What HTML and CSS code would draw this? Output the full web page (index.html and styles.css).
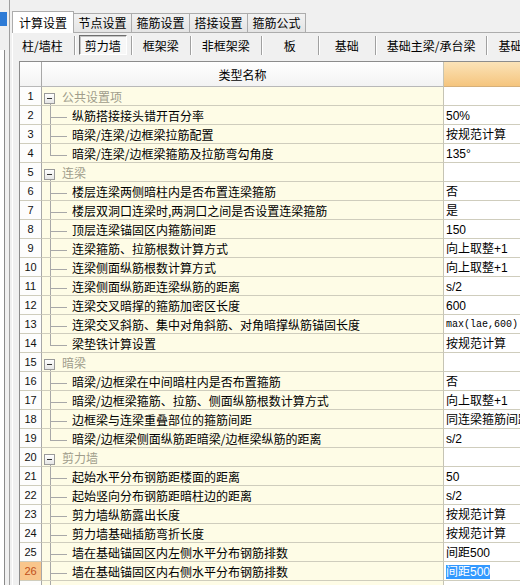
FILE: index.html
```html
<!DOCTYPE html>
<html lang="zh-CN">
<head>
<meta charset="utf-8">
<title>计算设置</title>
<link rel="stylesheet" href="styles.css">
</head>
<body>
<div class="app">
  <aside class="side">
    <div class="side-sel"></div>
    <div class="side-list"></div>
  </aside>
  <main class="main">
    <div class="tabs">
      <div class="tab active">计算设置</div>
      <div class="tab">节点设置</div>
      <div class="tab">箍筋设置</div>
      <div class="tab">搭接设置</div>
      <div class="tab">箍筋公式</div>
    </div>
    <div class="page">
      <div class="subtabs">
        <div class="sub">柱/墙柱</div>
        <div class="sub pressed"><span class="btn">剪力墙</span></div>
        <div class="sub">框架梁</div>
        <div class="sub">非框架梁</div>
        <div class="sub">板</div>
        <div class="sub">基础</div>
        <div class="sub">基础主梁/承台梁</div>
        <div class="sub">基础次梁</div>
      </div>
      <div class="grid">
        <div class="row head"><div class="num"></div><div class="name">类型名称</div><div class="val"></div></div>

        <div class="row group"><div class="num">1</div><div class="name"><span class="box"></span>公共设置项</div><div class="val"></div></div>
        <div class="row child"><div class="num">2</div><div class="name">纵筋搭接接头错开百分率</div><div class="val">50%</div></div>
        <div class="row child"><div class="num">3</div><div class="name">暗梁/连梁/边框梁拉筋配置</div><div class="val">按规范计算</div></div>
        <div class="row child last"><div class="num">4</div><div class="name">暗梁/连梁/边框梁箍筋及拉筋弯勾角度</div><div class="val">135°</div></div>

        <div class="row group"><div class="num">5</div><div class="name"><span class="box"></span>连梁</div><div class="val"></div></div>
        <div class="row child"><div class="num">6</div><div class="name">楼层连梁两侧暗柱内是否布置连梁箍筋</div><div class="val">否</div></div>
        <div class="row child"><div class="num">7</div><div class="name">楼层双洞口连梁时,两洞口之间是否设置连梁箍筋</div><div class="val">是</div></div>
        <div class="row child"><div class="num">8</div><div class="name">顶层连梁锚固区内箍筋间距</div><div class="val">150</div></div>
        <div class="row child"><div class="num">9</div><div class="name">连梁箍筋、拉筋根数计算方式</div><div class="val">向上取整+1</div></div>
        <div class="row child"><div class="num">10</div><div class="name">连梁侧面纵筋根数计算方式</div><div class="val">向上取整+1</div></div>
        <div class="row child"><div class="num">11</div><div class="name">连梁侧面纵筋距连梁纵筋的距离</div><div class="val">s/2</div></div>
        <div class="row child"><div class="num">12</div><div class="name">连梁交叉暗撑的箍筋加密区长度</div><div class="val">600</div></div>
        <div class="row child"><div class="num">13</div><div class="name">连梁交叉斜筋、集中对角斜筋、对角暗撑纵筋锚固长度</div><div class="val mono">max(lae,600)</div></div>
        <div class="row child last"><div class="num">14</div><div class="name">梁垫铁计算设置</div><div class="val">按规范计算</div></div>

        <div class="row group"><div class="num">15</div><div class="name"><span class="box"></span>暗梁</div><div class="val"></div></div>
        <div class="row child"><div class="num">16</div><div class="name">暗梁/边框梁在中间暗柱内是否布置箍筋</div><div class="val">否</div></div>
        <div class="row child"><div class="num">17</div><div class="name">暗梁/边框梁箍筋、拉筋、侧面纵筋根数计算方式</div><div class="val">向上取整+1</div></div>
        <div class="row child"><div class="num">18</div><div class="name">边框梁与连梁重叠部位的箍筋间距</div><div class="val">同连梁箍筋间距</div></div>
        <div class="row child last"><div class="num">19</div><div class="name">暗梁/边框梁侧面纵筋距暗梁/边框梁纵筋的距离</div><div class="val">s/2</div></div>

        <div class="row group"><div class="num">20</div><div class="name"><span class="box"></span>剪力墙</div><div class="val"></div></div>
        <div class="row child"><div class="num">21</div><div class="name">起始水平分布钢筋距楼面的距离</div><div class="val">50</div></div>
        <div class="row child"><div class="num">22</div><div class="name">起始竖向分布钢筋距暗柱边的距离</div><div class="val">s/2</div></div>
        <div class="row child"><div class="num">23</div><div class="name">剪力墙纵筋露出长度</div><div class="val">按规范计算</div></div>
        <div class="row child"><div class="num">24</div><div class="name">剪力墙基础插筋弯折长度</div><div class="val">按规范计算</div></div>
        <div class="row child"><div class="num">25</div><div class="name">墙在基础锚固区内左侧水平分布钢筋排数</div><div class="val">间距500</div></div>
        <div class="row child current"><div class="num">26</div><div class="name">墙在基础锚固区内右侧水平分布钢筋排数</div><div class="val"><span class="sel">间距500</span></div></div>
        <div class="row child"><div class="num">27</div><div class="name">暗梁/边框梁/连梁纵筋与墙水平分布钢筋重叠时是否计算水平筋</div><div class="val">否</div></div>
      </div>
    </div>
  </main>
</div>
</body>
</html>
```

FILE: styles.css
```css
* { box-sizing: border-box; margin: 0; padding: 0; }
html, body { width: 520px; height: 585px; overflow: hidden; }
body {
  background: #f0f0f0;
  font-family: "Noto Sans CJK SC", "Liberation Sans", sans-serif;
  font-size: 12px;
  color: #000;
}
.app { display: flex; height: 585px; }

/* left strip */
.side {
  width: 10px; flex: none;
  display: flex; flex-direction: column;
  border-right: 1px solid #a0a0a0;
}
.side-sel { margin-top: 12px; width: 7px; height: 14px; background: #2e7bd6; }
.side-list {
  margin-top: 24px; flex: 1;
  width: 5px;
  background: #fff;
  border-right: 1px solid #8a8a8a;
}

.main { flex: 1; min-width: 0; overflow: hidden; padding-top: 11px; }

/* top tabs */
.tabs {
  display: flex; align-items: flex-end;
  height: 21px; padding-left: 4px;
  white-space: nowrap;
}
.tab {
  flex: none; width: 59px; height: 19px;
  margin-right: -1px;
  border: 1px solid #acacac; border-bottom: none;
  background: linear-gradient(#f2f2f2, #e4e4e4);
  text-align: center; line-height: 18px;
}
.tab.active {
  width: 62px; height: 22px; margin: 0 -1px -1px -2px;
  background: #fff; position: relative; z-index: 1;
  line-height: 21px;
}

/* tab page */
.page {
  margin-left: 2px;
  border-top: 1px solid #acacac;
  border-left: 1px solid #fff;
  height: 560px;
}
.subtabs {
  display: flex; padding-top: 3px; height: 28px;
  white-space: nowrap;
}
.sub {
  flex: none; min-width: 57px; height: 19px;
  padding: 0 11px;
  border-right: 1px solid #a0a0a0;
  box-shadow: 1px 0 0 #fff;
  text-align: center; line-height: 19px;
}
.sub:first-child { padding-left: 9px; }
.sub.pressed { padding: 0 4px; display: flex; align-items: stretch; }
.btn {
  flex: 1; display: block; margin-top: -1px; height: 20px;
  border: 1px solid; border-color: #6e6e6e #fff #fff #6e6e6e;
  box-shadow: inset 1px 1px 0 #c4c4c4;
  background: #f7f7f7; line-height: 18px; padding-top: 1px;
}

/* grid */
.grid {
  margin-left: 6px;
  border-top: 1px solid #8c8c8c;
  border-left: 1px solid #8c8c8c;
}
.row { display: flex; height: 19px; }
.num {
  flex: none; width: 22px;
  border-right: 1px solid #a8a8a8;
  border-bottom: 1px solid #cfcdbd;
  background: #fdfdfd;
  font-family: "Liberation Sans", sans-serif; font-size: 11px;
  text-align: center; line-height: 19px; color: #111;
}
.name {
  flex: none; width: 402px; position: relative;
  border-right: 1px solid #c6c4b4;
  border-bottom: 1px solid #cfcdbd;
  background: #fefce6;
  padding-left: 30px; line-height: 20px;
  white-space: nowrap; overflow: hidden;
}
.val {
  flex: 1; min-width: 0;
  border-bottom: 1px solid #cfcdbd;
  background: #fff;
  font-family: "Liberation Sans", "Noto Sans CJK SC", sans-serif;
  padding-left: 2px; line-height: 20px;
  white-space: nowrap; overflow: hidden;
}
.val.mono { font-family: "Liberation Mono", monospace; font-size: 10px; }

.head { height: 25px; }
.head .num, .head .name { background: linear-gradient(#ffffff, #f3f3f3); border-bottom-color: #b8b8b8; }
.head .name { text-align: center; padding-left: 0; line-height: 26px; }
.head .val { background: linear-gradient(#fbe3b8, #f5c57e); border-bottom-color: #d6b07a; }

.group .name { padding-left: 20px; color: #a09d8b; }
.box {
  position: absolute; left: 2px; top: 6px;
  width: 11px; height: 11px;
  border: 1px solid #9a9a9a;
  background: linear-gradient(#ffffff, #e6e6e6);
}
.box::after {
  content: ""; position: absolute; left: 2px; top: 4px;
  width: 5px; height: 1px; background: #333;
}
.group .name::before {
  content: ""; position: absolute; left: 8px; top: 17px; bottom: -1px;
  width: 1px; background: #a8a8a8;
}
.child .name::before {
  content: ""; position: absolute; left: 8px; top: -1px; bottom: -1px;
  width: 1px; background: #a8a8a8;
}
.child.last .name::before { bottom: auto; height: 13px; }
.child .name::after {
  content: ""; position: absolute; left: 9px; top: 11px;
  width: 16px; height: 1px; background: #a8a8a8;
}

.current .num { background: #f9c68c; color: #c0501a; }
.sel { background: #3399ff; color: #fff; display: inline-block; line-height: 14px; }
```
